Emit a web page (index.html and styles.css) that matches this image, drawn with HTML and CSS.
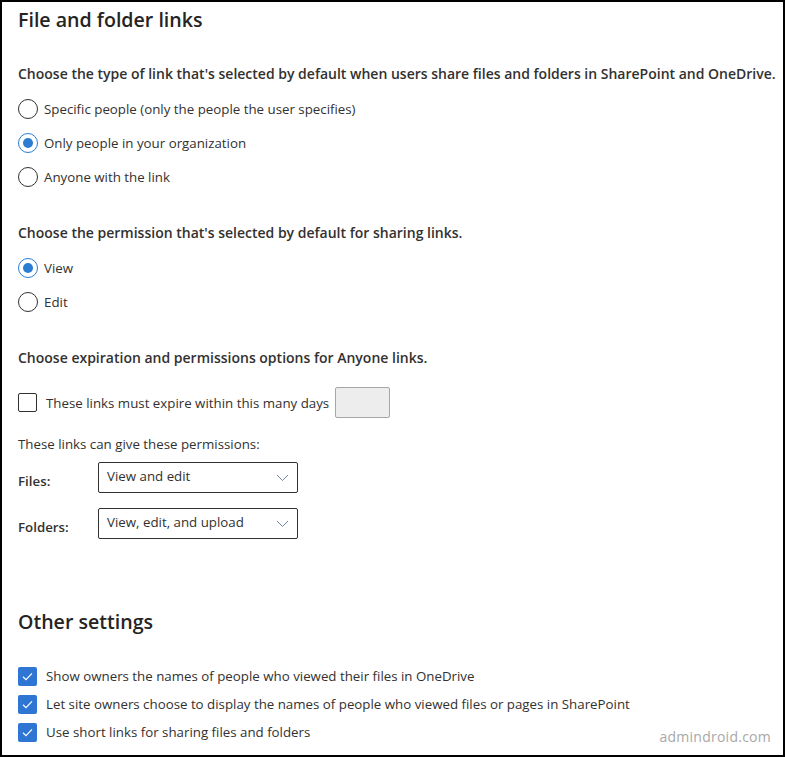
FILE: index.html
```html
<!DOCTYPE html>
<html>
<head>
    <title>File and folder links</title>
    <link rel="stylesheet" href="styles.css">
</head>
<body>
    <div class="panel">
        <h1>File and folder links</h1>

        <p class="question first">Choose the type of link that's selected by default when users share files and folders in SharePoint and OneDrive.</p>
        <div class="choices">
            <label class="radio"><span class="dot"></span>Specific people (only the people the user specifies)</label>
            <label class="radio"><span class="dot on"></span>Only people in your organization</label>
            <label class="radio"><span class="dot"></span>Anyone with the link</label>
        </div>

        <p class="question">Choose the permission that's selected by default for sharing links.</p>
        <div class="choices">
            <label class="radio"><span class="dot on"></span>View</label>
            <label class="radio"><span class="dot"></span>Edit</label>
        </div>

        <p class="question">Choose expiration and permissions options for Anyone links.</p>
        <div class="expire-row">
            <span class="box"></span>
            <span>These links must expire within this many days</span>
            <span class="days"></span>
        </div>

        <p class="note">These links can give these permissions:</p>
        <div class="perm-row">
            <span class="perm-label">Files:</span>
            <div class="select">
                <span>View and edit</span>
                <svg width="13" height="8" viewBox="0 0 13 8"><path d="M1 1 L6.5 6.5 L12 1" fill="none" stroke="#6f84a6" stroke-width="1"/></svg>
            </div>
        </div>
        <div class="perm-row second">
            <span class="perm-label">Folders:</span>
            <div class="select">
                <span>View, edit, and upload</span>
                <svg width="13" height="8" viewBox="0 0 13 8"><path d="M1 1 L6.5 6.5 L12 1" fill="none" stroke="#6f84a6" stroke-width="1"/></svg>
            </div>
        </div>

        <h1 class="other">Other settings</h1>
        <div class="checks">
            <label class="check"><span class="box ticked"><svg width="19" height="19" viewBox="0 0 19 19"><path d="M5 9.8 L8 12.6 L14 6.4" fill="none" stroke="#fff" stroke-width="1.2"/></svg></span>Show owners the names of people who viewed their files in OneDrive</label>
            <label class="check"><span class="box ticked"><svg width="19" height="19" viewBox="0 0 19 19"><path d="M5 9.8 L8 12.6 L14 6.4" fill="none" stroke="#fff" stroke-width="1.2"/></svg></span>Let site owners choose to display the names of people who viewed files or pages in SharePoint</label>
            <label class="check"><span class="box ticked"><svg width="19" height="19" viewBox="0 0 19 19"><path d="M5 9.8 L8 12.6 L14 6.4" fill="none" stroke="#fff" stroke-width="1.2"/></svg></span>Use short links for sharing files and folders</label>
        </div>

        <div class="watermark">admindroid.com</div>
    </div>
</body>
</html>
```

FILE: styles.css
```css
body {
    margin: 0;
    padding: 0;
    background-color: #ffffff;
    font-family: "Open Sans", "Noto Sans", Arial, sans-serif;
    font-size: 13.3px;
    color: #323130;
}

.panel {
    position: relative;
    width: 785px;
    height: 757px;
    box-sizing: border-box;
    border: 2px solid #000;
    padding: 4px 0 0 16px;
    overflow: hidden;
}

h1 {
    margin: 0;
    font-size: 19.6px;
    font-weight: 600;
    line-height: 28px;
    color: #252423;
}

.question {
    margin: 29px 0 0 0;
    font-size: 14px;
    font-weight: 600;
    line-height: 20px;
    white-space: nowrap;
}

.question.first {
    margin-top: 30px;
}

.choices {
    margin-top: 8px;
}

.radio {
    display: flex;
    align-items: center;
    height: 34px;
}

.dot {
    width: 18px;
    height: 18px;
    border: 1px solid #323130;
    border-radius: 50%;
    margin-right: 6px;
    box-sizing: content-box;
    position: relative;
}

.dot.on {
    border-color: #2b7cd3;
}

.dot.on::after {
    content: "";
    position: absolute;
    left: 4px;
    top: 4px;
    width: 10px;
    height: 10px;
    border-radius: 50%;
    background-color: #2b7cd3;
}

.expire-row {
    display: flex;
    align-items: center;
    height: 31px;
    margin-top: 19px;
}

.box {
    width: 17px;
    height: 17px;
    border: 1px solid #323130;
    border-radius: 2px;
    margin-right: 9px;
    flex-shrink: 0;
}

.days {
    width: 53px;
    height: 29px;
    margin-left: 6px;
    background-color: #ededed;
    border: 1px solid #a6a6a6;
    border-radius: 2px;
}

.note {
    margin: 16px 0 0 0;
    line-height: 20px;
}

.perm-row {
    display: flex;
    align-items: center;
    margin-top: 8px;
}

.perm-row.second {
    margin-top: 15px;
}

.perm-label {
    width: 80px;
    font-weight: 600;
    padding-top: 6px;
}

.select {
    width: 200px;
    height: 31px;
    box-sizing: border-box;
    border: 1px solid #323130;
    border-radius: 2px;
    display: flex;
    align-items: center;
    justify-content: space-between;
    padding: 0 8px 3px 8px;
}

.select svg {
    margin-top: 3px;
}

h1.other {
    margin-top: 69px;
}

.checks {
    margin-top: 26px;
}

.check {
    display: flex;
    align-items: center;
    height: 28px;
}

.box.ticked {
    width: 19px;
    height: 19px;
    border: none;
    background-color: #2f75d3;
}

.box.ticked svg {
    display: block;
}

.watermark {
    position: absolute;
    right: 12px;
    bottom: 9px;
    font-size: 14px;
    letter-spacing: 0.25px;
    color: #a8a8a8;
}
```
